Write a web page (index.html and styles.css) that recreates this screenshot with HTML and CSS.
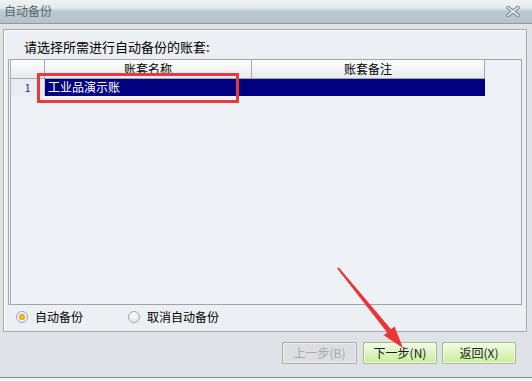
FILE: index.html
```html
<!DOCTYPE html>
<html lang="zh-CN">
<head>
<meta charset="utf-8">
<title>自动备份</title>
<link rel="stylesheet" href="styles.css">
</head>
<body>
<div class="window">
  <div class="titlebar">
    <span class="title">自动备份</span>
    <svg class="close" width="14" height="11" viewBox="0 0 14 11">
      <path d="M2 1.5 L12 9.5 M12 1.5 L2 9.5" stroke="#7d8a90" stroke-width="3.6" stroke-linecap="round" fill="none"/>
      <path d="M2 1.5 L12 9.5 M12 1.5 L2 9.5" stroke="#f4f6f7" stroke-width="1.6" stroke-linecap="round" fill="none"/>
    </svg>
  </div>
  <div class="main">
    <div class="group">
      <div class="prompt">请选择所需进行自动备份的账套:</div>
      <div class="grid">
        <div class="grid-row head">
          <div class="cell num"></div>
          <div class="cell name">账套名称</div>
          <div class="cell note">账套备注</div>
        </div>
        <div class="grid-row selected">
          <div class="cell num">1</div>
          <div class="cell name">工业品演示账</div>
          <div class="cell note"></div>
        </div>
      </div>
      <div class="radios">
        <label class="radio"><span class="dot on"></span>自动备份</label>
        <label class="radio"><span class="dot"></span>取消自动备份</label>
      </div>
    </div>
    <div class="buttons">
      <button class="btn disabled">上一步(B)</button>
      <button class="btn green">下一步(N)</button>
      <button class="btn green">返回(X)</button>
    </div>
  </div>
  <div class="statusline"></div>
  <div class="red-box"></div>
  <svg class="arrow" width="532" height="381" viewBox="0 0 532 381">
    <polygon points="337.2,268.6 387.2,332.5 383.7,335.3 403,348 394.5,326.5 391.0,329.3 338.8,267.4" fill="#ec3434"/>
  </svg>
</div>
</body>
</html>
```

FILE: styles.css
```css
* { box-sizing: border-box; }
html, body { margin: 0; padding: 0; }
body {
  width: 532px;
  height: 381px;
  overflow: hidden;
  background: #dfe3e7;
  font-family: "Noto Sans CJK SC", "Noto Sans", sans-serif;
  font-size: 12px;
  color: #000;
}
.window {
  position: relative;
  width: 532px;
  height: 381px;
  display: flex;
  flex-direction: column;
}
.titlebar {
  height: 24px;
  flex: none;
  display: flex;
  align-items: center;
  justify-content: space-between;
  padding: 0 12px 0 4px;
  background: linear-gradient(#eef3f4 0px, #e4ebed 8px, #bccacf 11px, #b4c3c8 23px);
  border-bottom: 1px solid #8e9ca2;
}
.title {
  color: #55646a;
  font-size: 12px;
  line-height: 16px;
  margin-top: -2px;
}
.close { display: block; margin-top: -1px; }
.main {
  flex: 1;
  display: flex;
  flex-direction: column;
}
.group {
  margin: 5px 5px 0 3px;
  border: 1px solid #a6aaae;
  box-shadow: inset 1px 1px 0 #ffffff;
  background: #eceff4;
  display: flex;
  flex-direction: column;
}
.prompt {
  padding: 9px 0 0 20px;
  height: 25px;
  line-height: 16px;
  font-size: 13px;
}
.grid {
  margin: 4px 4px 0 4px;
  height: 246px;
  border: 1px solid #9fa4a9;
  border-left: 3px double #a9adb2;
  background: #eef1f6;
}
.grid-row {
  display: flex;
  width: 474px;
}
.cell {
  line-height: 16px;
  white-space: nowrap;
}
.grid-row.head {
  height: 19px;
  background: linear-gradient(#ffffff, #e6eaee);
  border-bottom: 1px solid #a3a7ab;
}
.grid-row.head .cell {
  border-right: 1px solid #a3a7ab;
  text-align: center;
  padding-top: 1px;
}
.num { width: 34px; flex: none; }
.name { width: 207px; flex: none; }
.note { width: 233px; flex: none; }
.grid-row.selected {
  height: 17px;
}
.grid-row.selected .num {
  background: #e9edf1;
  color: #1a2a9a;
  text-align: center;
  border-right: 1px solid #c4c8cc;
  font-size: 11px;
}
.grid-row.selected .name,
.grid-row.selected .note {
  background: #000080;
  color: #ffffff;
}
.grid-row.selected .name { padding-left: 3px; }
.radios {
  display: flex;
  align-items: center;
  height: 18px;
  margin: 3px 0 5px 0;
  padding-left: 12px;
}
.radio {
  display: flex;
  align-items: center;
  gap: 7px;
  line-height: 16px;
}
.radio + .radio { margin-left: 45px; }
.dot {
  width: 12px;
  height: 12px;
  border-radius: 50%;
  border: 1px solid #9ea4aa;
  background: radial-gradient(circle at 50% 40%, #ffffff 0%, #dfe3e7 70%, #c8cdd2 100%);
  box-shadow: inset 0 0 0 1px #f8f9fa;
}
.dot.on {
  background: radial-gradient(circle at 50% 50%, #f7c13a 0%, #eaa51a 40%, #f3f4f5 45%, #d8dce0 100%);
}
.buttons {
  display: flex;
  justify-content: flex-end;
  gap: 5px;
  margin: 10px 16px 0 0;
}
.btn {
  height: 22px;
  width: 74px;
  padding: 0;
  font-family: inherit;
  font-size: 12px;
  line-height: 18px;
  border: 1px solid #a8b0a8;
  border-radius: 1px;
}
.btn.disabled {
  width: 75px;
  margin-right: 1px;
  background: #dcdedf;
  color: #a6a8aa;
  border-color: #a8aaac;
  box-shadow: inset 0 0 0 1px #eceeef;
}
.btn.green {
  background: linear-gradient(#f4fce9, #dcf5c0 50%, #c9ee9f);
  border-color: #9cc17c;
  color: #1a1a1a;
  box-shadow: inset 0 0 0 1px #f6fdee;
}
.statusline {
  height: 4px;
  flex: none;
  border-top: 1px solid #85898d;
  background: #f3f4f5;
}
.red-box {
  position: absolute;
  left: 37px;
  top: 73px;
  width: 202px;
  height: 30px;
  border: 3px solid #e83a3a;
}
.arrow {
  position: absolute;
  left: 0;
  top: 0;
  pointer-events: none;
}
```
